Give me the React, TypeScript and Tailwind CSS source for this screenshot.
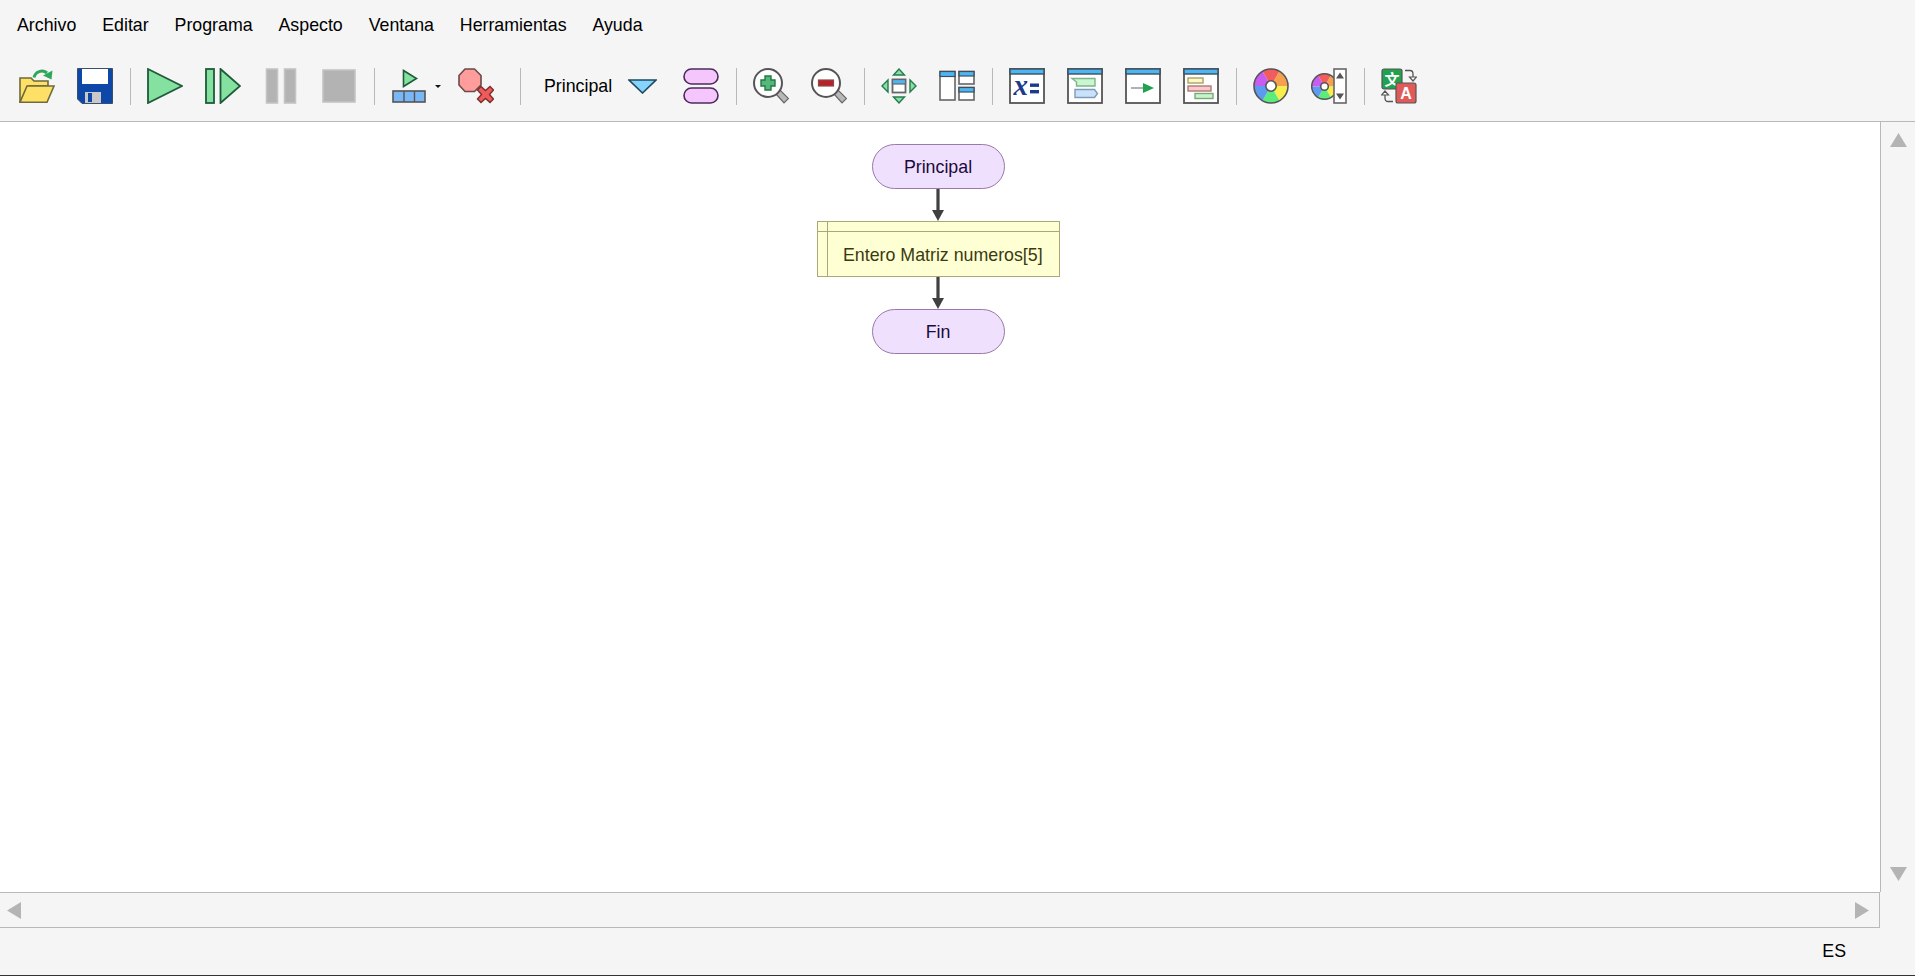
import React from "react";

const Sep = ({ ml }: { ml: string }) => <div className={`w-px h-[37px] bg-[#b9b9b9] shrink-0 ${ml}`} />;

const Ico = ({ ml, w = "w-9", vb = "0 0 36 36", children }: { ml: string; w?: string; vb?: string; children: React.ReactNode }) => (
  <svg viewBox={vb} className={`${w} h-9 shrink-0 ${ml}`}>{children}</svg>
);

function Wheel({ cx, cy, r, hole }: { cx: number; cy: number; r: number; hole: number }) {
  const colors = ["#f25c5c", "#f5a04e", "#f5ee4c", "#5cec7c", "#5c9cf0", "#c85cf0"];
  return (
    <g>
      {colors.map((c, i) => {
        const a0 = ((-120 + i * 60) * Math.PI) / 180;
        const a1 = ((-60 + i * 60) * Math.PI) / 180;
        const d = `M${cx} ${cy}L${cx + r * Math.cos(a0)} ${cy + r * Math.sin(a0)}A${r} ${r} 0 0 1 ${cx + r * Math.cos(a1)} ${cy + r * Math.sin(a1)}Z`;
        return <path key={c} d={d} fill={c} />;
      })}
      <circle cx={cx} cy={cy} r={r} fill="none" stroke="#555" strokeWidth="1.6" />
      <circle cx={cx} cy={cy} r={hole} fill="#fff" stroke="#555" strokeWidth="1.6" />
    </g>
  );
}

const Win = ({ children }: { children?: React.ReactNode }) => (
  <g>
    <rect x="1" y="1" width="34" height="34" fill="#fff" stroke="#555" strokeWidth="1.8" />
    <rect x="1" y="1" width="34" height="5" fill="#4db6f2" stroke="#3d4f5c" strokeWidth="1.4" />
    {children}
  </g>
);

const Menu = ["Archivo", "Editar", "Programa", "Aspecto", "Ventana", "Herramientas", "Ayuda"];

const Lens = ({ children }: { children: React.ReactNode }) => (
  <g>
    <path d="M23 26L27 22L35.5 30.5L31 35Z" fill="#b8b8b8" stroke="#666" strokeWidth="1.2" />
    <circle cx="15" cy="15" r="14" fill="#fff" stroke="#555" strokeWidth="2" />
    {children}
  </g>
);

const Pill = ({ label }: { label: string }) => (
  <div className="w-[133px] h-[45px] rounded-[23px] bg-[#efe0fd] border border-[#9b78ab] flex items-center justify-center pt-[2px] pr-[1px] text-[17.8px] text-[#1b0a3c]">
    {label}
  </div>
);

const Arrow = () => (
  <svg viewBox="0 0 12 32" className="w-3 h-8 block mr-[1px]">
    <rect x="4.4" y="0" width="3.2" height="22" fill="#404040" />
    <path d="M0 21H12L6 32Z" fill="#404040" />
  </svg>
);

export default function App() {
  return (
    <div className="w-full h-[976px] flex flex-col overflow-hidden bg-[#f5f5f5] text-black font-['Liberation_Sans',Arial,sans-serif]">
      <header className="h-[122px] shrink-0 border-b border-[#b9b9b9] bg-[#f5f5f5]">
        <nav className="flex h-[52px] items-center pl-[17px] gap-[25.9px] text-[17.8px] leading-none">
          {Menu.map((m) => (
            <span key={m}>{m}</span>
          ))}
        </nav>
        <div className="flex items-center h-9 mt-[16px] pl-[19px]">
          <Ico ml="">
            <path d="M15 9.5A8 8 0 0 1 28 5" fill="none" stroke="#2fa75a" strokeWidth="3" />
            <path d="M24 7.5L33.5 2.5L32.5 11.5Z" fill="#2fa75a" />
            <path d="M1 34V10H12L15 13H29V18H9L1 34Z" fill="#ffe066" stroke="#6d6a3c" strokeWidth="1.6" />
            <path d="M1 34.2L8 18H35L28 34.2Z" fill="#ffe066" stroke="#6d6a3c" strokeWidth="1.6" />
          </Ico>
          <Ico ml="ml-[22px]">
            <path d="M.5.5H35.5V35.5H5L.5 31Z" fill="#0d47a8" stroke="#3a4f6e" />
            <rect x="5" y="1" width="26" height="15" fill="#fff" />
            <rect x="8" y="24" width="16" height="11" fill="#c9c9c9" />
            <rect x="11" y="25" width="4" height="9" fill="#0d47a8" />
          </Ico>
          <Sep ml="ml-[17px]" />
          <Ico ml="ml-[16px]">
            <path d="M1 1L35 18L1 35Z" fill="#84e1a0" stroke="#1f5a3a" strokeWidth="1.8" />
          </Ico>
          <Ico ml="ml-[22px]">
            <rect x="1" y="1" width="8" height="34" fill="#84e1a0" stroke="#1f5a3a" strokeWidth="1.8" />
            <path d="M15.5 1L35 18L15.5 35Z" fill="#84e1a0" stroke="#1f5a3a" strokeWidth="1.8" />
          </Ico>
          <Ico ml="ml-[22px]">
            <rect x="3.5" y="1" width="11" height="34" fill="#b3b3b3" stroke="#c4c4c4" strokeWidth="1.6" />
            <rect x="21.5" y="1" width="11" height="34" fill="#b3b3b3" stroke="#c4c4c4" strokeWidth="1.6" />
          </Ico>
          <Ico ml="ml-[22px]">
            <rect x="2" y="2" width="32" height="32" fill="#b3b3b3" stroke="#c4c4c4" strokeWidth="1.6" />
          </Ico>
          <Sep ml="ml-[17px]" />
          <Ico ml="ml-[16px]">
            <path d="M12.5 2.5L25.5 10.5L12.5 18.5Z" fill="#84e1a0" stroke="#1f5a3a" strokeWidth="1.6" />
            <rect x="2" y="23" width="32" height="11" fill="#7ab8f5" stroke="#555" strokeWidth="1.6" />
            <path d="M13 23V34M23.5 23V34" stroke="#555" strokeWidth="1.4" />
          </Ico>
          <svg viewBox="0 0 6 3" className="w-[6px] h-[3px] ml-[8px] shrink-0">
            <path d="M0 0H6L3 3Z" fill="#111" />
          </svg>
          <Ico ml="ml-[17px]">
            <path d="M7 1H16.5L23 7.5V17L16.5 23.5H7L1 17V7.5Z" fill="#ff9c9c" stroke="#6a4a4a" strokeWidth="1.6" strokeLinejoin="round" />
            <path d="M19.5 22L23 18.5L27.5 22.5L32 18.5L35.5 22L31.5 26.5L35.5 31L32 34.5L27.5 30.5L23 34.5L19.5 31L23.5 26.5Z" fill="#f05a5a" stroke="#7a3030" strokeWidth="1.4" />
          </Ico>
          <Sep ml="ml-[26px]" />
          <span className="ml-[23px] w-[70px] pt-[2px] text-[17.8px] leading-none shrink-0">Principal</span>
          <svg viewBox="0 0 29 15" className="w-[29px] h-[15px] ml-[14px] shrink-0">
            <path d="M1 1H28L14.5 14Z" fill="#84d4ff" stroke="#204a5c" strokeWidth="1.6" />
          </svg>
          <Ico ml="ml-[26px]">
            <rect x="1" y="1" width="34" height="15" rx="7.5" fill="#f4c6fc" stroke="#4a2d5c" strokeWidth="1.6" />
            <rect x="1" y="20" width="34" height="15" rx="7.5" fill="#f4c6fc" stroke="#4a2d5c" strokeWidth="1.6" />
          </Ico>
          <Sep ml="ml-[17px]" />
          <Ico ml="ml-[16px]">
            <Lens>
              <path d="M12 8H18V12H22V18H18V22H12V18H8V12H12Z" fill="#56b878" stroke="#1f7a42" strokeWidth="1.4" />
            </Lens>
          </Ico>
          <Ico ml="ml-[22px]">
            <Lens>
              <rect x="7.5" y="12" width="15" height="6" fill="#b8202c" stroke="#8a4a4a" strokeWidth="1.2" />
            </Lens>
          </Ico>
          <Sep ml="ml-[17px]" />
          <Ico ml="ml-[16px]">
            <path d="M12.5 7L18 1L23.5 7Z M12.5 29L18 35L23.5 29Z M7 12V24L1 18Z M29 12V24L35 18Z" fill="#84e1a0" stroke="#2a7a50" strokeWidth="1.4" />
            <rect x="11.5" y="11.5" width="13" height="13" fill="#fff" stroke="#666" strokeWidth="1.8" />
            <rect x="11.5" y="11.5" width="13" height="4.5" fill="#4db6f2" stroke="#666" strokeWidth="1.2" />
          </Ico>
          <Ico ml="ml-[22px]">
            <rect x="1" y="3.5" width="15" height="28.5" fill="#fff" stroke="#666" strokeWidth="1.6" />
            <rect x="1" y="3.5" width="15" height="5" fill="#4db6f2" stroke="#3d4f5c" strokeWidth="1.2" />
            <rect x="20" y="3.5" width="15" height="12.5" fill="#fff" stroke="#666" strokeWidth="1.6" />
            <rect x="20" y="3.5" width="15" height="4.5" fill="#4db6f2" stroke="#3d4f5c" strokeWidth="1.2" />
            <rect x="20" y="19.5" width="15" height="12.5" fill="#fff" stroke="#666" strokeWidth="1.6" />
            <rect x="20" y="19.5" width="15" height="4.5" fill="#4db6f2" stroke="#3d4f5c" strokeWidth="1.2" />
          </Ico>
          <Sep ml="ml-[17px]" />
          <Ico ml="ml-[16px]">
            <Win>
              <text x="4.5" y="27" fontFamily="'Liberation Serif',serif" fontStyle="italic" fontWeight="700" fontSize="29" fill="#1d3b8b">x</text>
              <rect x="21" y="15.5" width="9" height="3.4" fill="#1d3b8b" />
              <rect x="21" y="22" width="9" height="3.4" fill="#1d3b8b" />
            </Win>
          </Ico>
          <Ico ml="ml-[22px]">
            <Win>
              <path d="M5 10.5H28V18H9.5V14Z" fill="#c9f7d0" stroke="#7fb48a" strokeWidth="1.4" />
              <path d="M8 21.5H27.5L30.5 25.5L27.5 29.5H8Z" fill="#c9e2fb" stroke="#7f9bb8" strokeWidth="1.4" />
            </Win>
          </Ico>
          <Ico ml="ml-[22px]">
            <Win>
              <path d="M6 20H20" stroke="#a9a9a9" strokeWidth="1.8" />
              <path d="M18 15L29 20L18 25Z" fill="#21a24f" />
            </Win>
          </Ico>
          <Ico ml="ml-[22px]">
            <Win>
              <rect x="5" y="10" width="15" height="5" fill="#fff7c4" stroke="#a8a26a" strokeWidth="1.4" />
              <rect x="5" y="18" width="23" height="5" fill="#ffc8c8" stroke="#a87a7a" strokeWidth="1.4" />
              <rect x="12" y="25.5" width="18" height="5" fill="#c8f5c8" stroke="#7aa87a" strokeWidth="1.4" />
            </Win>
          </Ico>
          <Sep ml="ml-[17px]" />
          <Ico ml="ml-[16px]">
            <Wheel cx={18} cy={18} r={17} hole={5.2} />
          </Ico>
          <Ico ml="ml-[22px]">
            <Wheel cx={13.5} cy={18.5} r={12.8} hole={3.8} />
            <rect x="23" y="1" width="12" height="34" fill="#fff" stroke="#666" strokeWidth="1.6" />
            <path d="M29 4.5L33 10.5H25Z M29 31.5L33 25.5H25Z" fill="#555" />
          </Ico>
          <Sep ml="ml-[17px]" />
          <Ico ml="ml-[16px]">
            <rect x="1" y="1" width="20" height="20" rx="2" fill="#21a24f" stroke="#555" strokeWidth="1.2" />
            <text x="11" y="17" textAnchor="middle" fontFamily="'Noto Sans CJK SC',sans-serif" fontWeight="700" fontSize="15" fill="#fff">文</text>
            <rect x="15" y="15" width="20" height="20" rx="2" fill="#e15a5a" stroke="#555" strokeWidth="1.2" />
            <text x="25" y="31" textAnchor="middle" fontFamily="'Liberation Sans',sans-serif" fontWeight="700" fontSize="16" fill="#fff">A</text>
            <path d="M24 2.5H29Q32 2.5 32 6V9" fill="none" stroke="#555" strokeWidth="1.3" />
            <path d="M28.5 9H35.5L32 13Z" fill="#fff" stroke="#555" strokeWidth="1.2" />
            <path d="M12 33.5H7Q4 33.5 4 30V27" fill="none" stroke="#555" strokeWidth="1.3" />
            <path d="M.5 27H7.5L4 23Z" fill="#fff" stroke="#555" strokeWidth="1.2" />
          </Ico>
        </div>
      </header>

      <div className="flex-1 min-h-0 flex">
        <main className="flex-1 min-w-0 bg-white pt-[22px] pl-[817px]">
          <div className="w-[243px] flex flex-col items-center text-[#1b0a3c]">
            <Pill label="Principal" />
            <Arrow />
            <div className="w-[243px] h-[56px] bg-[#ffffd4] border border-[#a8a878] grid grid-cols-[10px_1fr] grid-rows-[10px_1fr] text-[17.8px] text-[#3a3a10]">
              <div className="border-r border-b border-[#a8a878]" />
              <div className="border-b border-[#a8a878]" />
              <div className="border-r border-[#a8a878]" />
              <div className="flex items-center pl-[15px] pt-[2px] whitespace-nowrap">Entero Matriz numeros[5]</div>
            </div>
            <Arrow />
            <Pill label="Fin" />
          </div>
        </main>
        <aside className="w-[35px] shrink-0 border-l border-[#b9b9b9] bg-[#f5f5f5] flex flex-col items-center justify-between pt-[11px] pb-[11px]">
          <svg viewBox="0 0 17 14" className="w-[17px] h-[14px]"><path d="M8.5 0L17 14H0Z" fill="#b4b4b4" /></svg>
          <svg viewBox="0 0 17 14" className="w-[17px] h-[14px]"><path d="M0 0H17L8.5 14Z" fill="#b4b4b4" /></svg>
        </aside>
      </div>

      <div className="h-[36px] shrink-0 flex">
        <div className="w-[1880px] border-t border-b border-r border-[#b9b9b9] flex items-center justify-between pl-[7px] pr-[10px]">
          <svg viewBox="0 0 14 17" className="w-[14px] h-[17px]"><path d="M14 0V17L0 8.5Z" fill="#b4b4b4" /></svg>
          <svg viewBox="0 0 14 17" className="w-[14px] h-[17px]"><path d="M0 0V17L14 8.5Z" fill="#b4b4b4" /></svg>
        </div>
      </div>

      <footer className="h-[48px] shrink-0 border-b border-[#333] flex items-center justify-end pr-[69px] pt-[1px] text-[17.8px] leading-none">
        ES
      </footer>
    </div>
  );
}
